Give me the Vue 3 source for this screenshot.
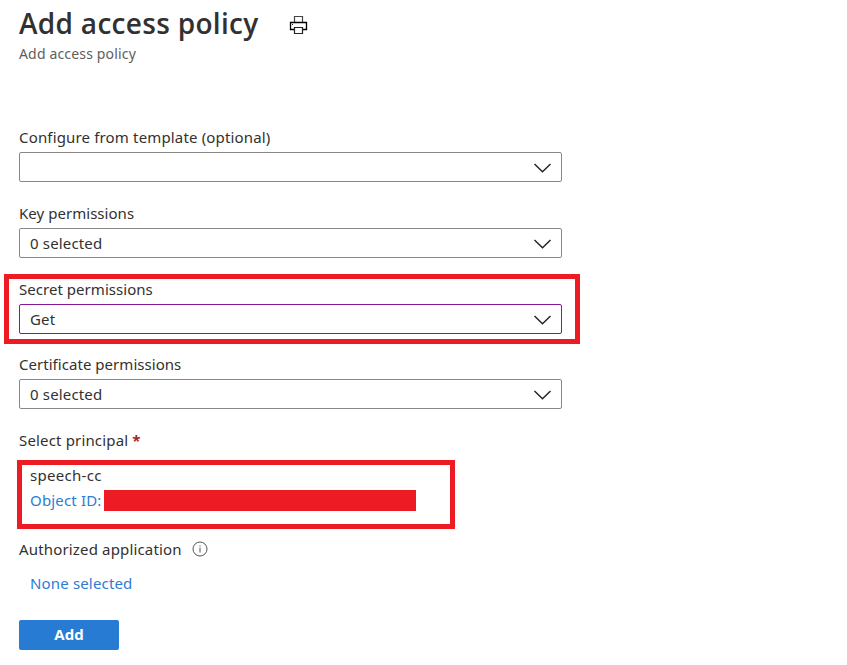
<script setup>
const fields = [
  { label: 'Configure from template (optional)', value: '', cls: 'template' },
  { label: 'Key permissions', value: '0 selected', cls: 'key' },
  { label: 'Secret permissions', value: 'Get', cls: 'secret' },
  { label: 'Certificate permissions', value: '0 selected', cls: 'certificate' },
]
</script>

<template>
  <main class="page">
    <header class="header">
      <div class="title-row">
        <h1 class="title"><span>Add access policy</span></h1>
        <svg class="printer" width="20" height="20" viewBox="0 0 20 20" fill="none">
          <path d="M5.5 7V1.5H13.5V7" stroke="#444" stroke-width="1.2" />
          <path d="M5 14.5H1.5V7.5H17.5V14.5H14" stroke="#000" stroke-width="1.3" />
          <path d="M5.5 12.5H13.5V18.5H5.5Z" stroke="#222" stroke-width="1.2" />
          <path d="M3 9.5H4" stroke="#222" />
        </svg>
      </div>
      <p class="subtitle"><span>Add access policy</span></p>
    </header>

    <section class="fields">
      <div v-for="f in fields" :key="f.label" class="field" :class="f.cls">
        <div class="label"><span>{{ f.label }}</span></div>
        <div class="select">
          <span class="value">{{ f.value }}</span>
          <svg class="chevron" width="18" height="10" viewBox="0 0 18 10" fill="none">
            <path d="M0.5 1L8.5 8.8L16.5 1" stroke="#222" stroke-width="1.4" />
          </svg>
        </div>
      </div>
    </section>

    <div class="label principal-label"><span>Select principal</span><b class="required">*</b></div>
    <section class="principal">
      <div class="name"><span>speech-cc</span></div>
      <div class="object"><a class="link">Object ID:</a><span class="redacted"></span></div>
    </section>

    <div class="label app-label">
      <span>Authorized application</span>
      <svg class="info" width="16" height="16" viewBox="0 0 16 16" fill="none">
        <circle cx="8" cy="8" r="7" stroke="#555" />
        <path d="M8 6.5V11.5M8 4.3V5.4" stroke="#555" />
      </svg>
    </div>
    <div class="none"><a class="link">None selected</a></div>
    <button class="add" type="button">Add</button>
  </main>
</template>

<style>
body { background: #fff; }
</style>

<style scoped>
.page {
  box-sizing: border-box;
  width: 847px;
  height: 665px;
  padding-left: 19px;
  overflow: hidden;
  color: #323130;
  font-family: "Noto Sans", "Open Sans", sans-serif;
  font-size: 15px;
  letter-spacing: 0.16px;
}
.header { height: 127px; }
.title-row { display: flex; height: 44px; }
.title {
  width: 270px;
  margin: 0;
  font-family: "Open Sans", "Noto Sans", sans-serif;
  font-size: 28px;
  font-weight: 600;
  line-height: 46px;
  letter-spacing: 0.3px;
  white-space: nowrap;
}
.printer { margin-top: 15px; }
.subtitle { margin: 0; font-size: 14px; line-height: 20px; color: #605e5c; }
.fields { display: flex; flex-direction: column; }
.field { position: relative; width: 543px; height: 76px; }
.key .label, .secret .label, .certificate .label { letter-spacing: 0.04px; }
.secret { height: 75px; }
.secret::before {
  content: "";
  position: absolute;
  box-sizing: border-box;
  top: -5px;
  left: -15px;
  width: 576px;
  height: 70px;
  border: 5px solid #ed1c24;
}
.label { display: flex; align-items: center; height: 20px; line-height: 20px; white-space: nowrap; }
.select {
  display: flex;
  align-items: center;
  justify-content: space-between;
  box-sizing: border-box;
  height: 30px;
  margin-top: 5px;
  padding: 1px 9px 0 10px;
  border: 1px solid #8a8886;
  border-radius: 2px;
  line-height: 27px;
}
.secret .select { border-color: #881798; }
.principal-label { height: 20px; }
.required { margin-left: 4px; color: #a4262c; }
.principal {
  box-sizing: border-box;
  width: 438px;
  height: 69px;
  margin: 10px 0 0 -2px;
  padding-left: 8px;
  border: 5px solid #ed1c24;
}
.name { height: 25px; line-height: 20px; letter-spacing: 0.3px; }
.object { display: flex; height: 21px; line-height: 21px; }
.object .link { width: 74px; white-space: nowrap; }
.redacted { width: 312px; height: 21px; background: #ed1c24; }
.link { color: #2b7cd3; }
.app-label { margin-top: 10px; }
.info { margin-left: 10.5px; }
.none { height: 20px; margin: 14px 0 0 11px; line-height: 20px; }
.add {
  display: block;
  width: 100px;
  height: 30px;
  margin: 27px 0 0;
  padding: 0 0 2px;
  border: 0;
  border-radius: 2px;
  background: #277bd3;
  color: #fff;
  font: 700 15px/28px "Open Sans", "Noto Sans", sans-serif;
}
</style>
